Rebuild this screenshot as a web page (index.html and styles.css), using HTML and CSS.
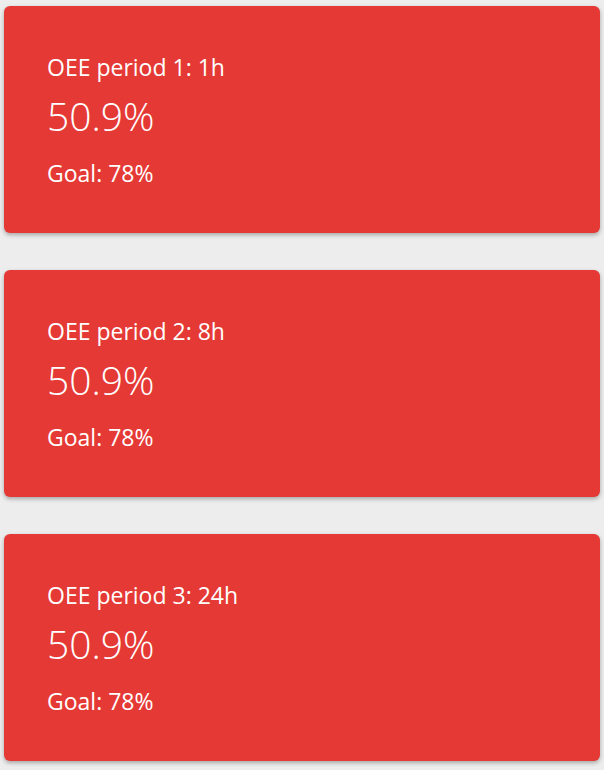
FILE: index.html
```html
<!DOCTYPE html>
<html>
  <head>
    <meta charset="utf-8">
    <title>OEE</title>
    <link rel="stylesheet" href="styles.css">
  </head>
  <body>
    <div class="list">
      <div class="card">
        <p class="title">OEE period 1: 1h</p>
        <p class="value">50.9%</p>
        <p class="goal">Goal: 78%</p>
      </div>
      <div class="card">
        <p class="title">OEE period 2: 8h</p>
        <p class="value">50.9%</p>
        <p class="goal">Goal: 78%</p>
      </div>
      <div class="card">
        <p class="title">OEE period 3: 24h</p>
        <p class="value">50.9%</p>
        <p class="goal">Goal: 78%</p>
      </div>
    </div>
  </body>
</html>
```

FILE: styles.css
```css
*{ margin:0; padding:0; box-sizing: border-box; }
body{ background: #ededed; font-family: "Open Sans", "Noto Sans", sans-serif; color: #fff; }
.list{ display: flex; flex-direction: column; gap: 37px; padding: 6px 4px; }
.card{ height: 227px; background: #e53935; border-radius: 6px;
  box-shadow: 0 2px 4px rgba(0,0,0,.3); padding: 46px 43px 0; }
.title{ font-size: 23px; line-height: 30px; }
.value{ font-size: 39px; font-weight: 300; line-height: 48px; margin-top: 10px; }
.goal{ font-size: 23px; line-height: 30px; margin-top: 18px; }
```
